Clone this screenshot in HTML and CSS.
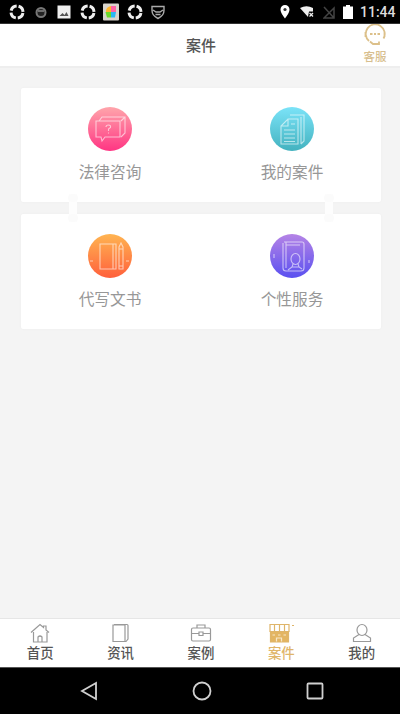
FILE: index.html
```
<!DOCTYPE html>
<html lang="zh-CN">
<head>
    <meta charset="UTF-8">
    <meta name="viewport" content="width=device-width, initial-scale=1.0">
    <title>案件</title>
    <link rel="stylesheet" href="styles.css">
</head>
<body>
    <!-- Phone status bar -->
    <div class="status-bar">
        <div class="status-icons">
            <svg width="18" height="18" viewBox="0 0 18 18"><circle class="ring" cx="9" cy="9" r="6"/></svg>
            <svg width="18" height="18" viewBox="0 0 18 18"><circle cx="9" cy="9.500" r="4.500" fill="#222" stroke="#777" stroke-width="2"/><path d="M6 8h6" stroke="#888" stroke-width="1.500"/></svg>
            <svg width="18" height="18" viewBox="0 0 18 18"><rect x="2.500" y="2.500" width="13" height="13" fill="#eee"/><path d="M4.500 13l3-3 2 2 2-3 2 4z" fill="#555"/></svg>
            <svg width="18" height="18" viewBox="0 0 18 18"><circle class="ring" cx="9" cy="9" r="6"/></svg>
            <svg width="18" height="18" viewBox="0 0 18 18">
                <rect x="1" y="0.500" width="16" height="17" rx="1" fill="#d8d4cc"/>
                <path d="M4 8q0-4 5-5v6H4z" fill="#ffb52e"/>
                <path d="M9 3h5v6H9z" fill="#ff64a5"/>
                <path d="M3.500 9H9v5.500H5z" fill="#6ada2c"/>
                <path d="M9 9h5l-1 5.500H9z" fill="#28b9f5"/>
            </svg>
            <svg width="18" height="18" viewBox="0 0 18 18"><circle class="ring" cx="9" cy="9" r="6"/></svg>
            <svg width="18" height="18" viewBox="0 0 18 18" fill="none" stroke="#aaa" stroke-width="1.400"><path d="M3 3.500h12v4q0 5-6 8-6-3-6-8zM4 7l3 2h4l3-2M6.500 11.500h5"/></svg>
        </div>
        <div class="status-right">
            <svg width="12" height="16" viewBox="0 0 12 16"><path d="M6 1a4.500 4.500 0 0 1 4.500 4.500C10.500 9 6 14.500 6 14.500S1.500 9 1.500 5.500A4.500 4.500 0 0 1 6 1z" fill="#fff"/><circle cx="6" cy="5.500" r="1.600" fill="#333"/></svg>
            <svg width="16" height="14" viewBox="0 0 16 14"><path d="M1 3q6.500-3.500 13 0v3.500h-4L9 12z" fill="#eee"/><path d="M10.500 8l3.500 3.500M14 8l-3.500 3.500" stroke="#eee" stroke-width="1.300"/></svg>
            <svg width="12" height="14" viewBox="0 0 12 14"><path d="M1 13L11 3v10zM1 2l10 11" fill="none" stroke="#444" stroke-width="1.500"/></svg>
            <svg width="10" height="14" viewBox="0 0 10 14"><path d="M3 0h4v1.500h3V14H0V1.500h3z" fill="#fff"/></svg>
            <span class="clock">11:44</span>
        </div>
    </div>

    <!-- Title and customer service -->
    <header class="header">
        <h1>案件</h1>
        <a class="service" href="#">
            <svg width="24" height="23" viewBox="0 0 24 23" fill="none" stroke="#dcc08a" stroke-width="1.800">
                <path d="M6 17A9.500 9.500 0 1 1 20.500 14.500M2.500 8v5M21.500 8v5M7 17.500l3 2.500h6v-2.500"/>
                <path d="M7 10h2.500M11 10h2M14.500 10h2.500"/>
            </svg>
            <span>客服</span>
        </a>
    </header>

    <main class="content">
        <section class="card">
            <a class="item" href="#">
                <span class="circle pink">
                    <svg width="44" height="44" viewBox="0 0 44 44">
                        <path d="M8 14h24v16H17l-3 4-1-4H8zM11 14l3-4h23v16l-4 4M33 14l4-4"/>
                        <path d="M18 20q0-2 2.500-2t2 2.500L20.500 22v2M20.500 25.500v1"/>
                    </svg>
                </span>
                <span class="label">法律咨询</span>
            </a>
            <a class="item" href="#">
                <span class="circle blue">
                    <svg width="44" height="44" viewBox="0 0 44 44">
                        <path d="M18 12h10v25H11V19zM18 12v7h-7M20 8h14v26l-3 3M31 10v27"/>
                        <path d="M14 23h11M14 27h11M14 31h11M14 34.500h11M21 17h4"/>
                    </svg>
                </span>
                <span class="label">我的案件</span>
            </a>
        </section>

        <section class="card linked">
            <i class="connector left"></i>
            <i class="connector right"></i>
            <a class="item" href="#">
                <span class="circle orange">
                    <svg width="44" height="44" viewBox="0 0 44 44">
                        <path d="M12 10h16v25H12zM25 10v25M31 13l2-4 2 4v22h-4zM31 15h4M31 32h4M2 27h3M38 27h3"/>
                    </svg>
                </span>
                <span class="label">代写文书</span>
            </a>
            <a class="item" href="#">
                <span class="circle purple">
                    <svg width="44" height="44" viewBox="0 0 44 44">
                        <path d="M14 8h18q2 0 2 2v24q0 3-3 3H16q-3 0-3-3V9M16 11h14M16 8v26"/>
                        <ellipse cx="25.500" cy="25" rx="4.500" ry="5.500"/>
                        <path d="M23 30l-1 3-4 3M28 30l1 3 3 2M22 33h7M4 20v4M39 26v3"/>
                    </svg>
                </span>
                <span class="label">个性服务</span>
            </a>
        </section>
    </main>

    <!-- Bottom tabs -->
    <nav class="tabs">
        <a class="tab" href="#">
            <svg width="22" height="20" viewBox="0 0 22 20"><path d="M2 9.500L11 1.500l3.500 3V3H17v4l3 2.500M4.500 9v10h13.500V9M9 19v-5q2-2 4 0v5"/></svg>
            <span>首页</span>
        </a>
        <a class="tab" href="#">
            <svg width="22" height="20" viewBox="0 0 22 20"><path d="M3 2h12v16.500H3zM4 1.500h13q1 0 1 1v13.500l-2 2.500h-2"/></svg>
            <span>资讯</span>
        </a>
        <a class="tab" href="#">
            <svg width="22" height="20" viewBox="0 0 22 20"><rect x="1.500" y="5" width="19" height="13" rx="1.500"/><path d="M7 5V2h8v3M1.500 10.500H9M13 10.500h7.500M9 9h4v3.500H9z"/></svg>
            <span>案例</span>
        </a>
        <a class="tab active" href="#">
            <svg width="26" height="20" viewBox="0 0 26 20">
                <path d="M2 1.500h19v7H2zM6.500 1.500v7M11.500 1.500v7M16.500 1.500v7M24 2.500h2"/>
                <path class="solid" d="M2.500 8.500h18V19h-18z"/>
                <path d="M8.500 18.500v-3.500h5v3.500M4.500 12h2.500M10 12h2.500M15.500 12h2.500" stroke="#f7e7c8"/>
            </svg>
            <span>案件</span>
        </a>
        <a class="tab" href="#">
            <svg width="22" height="20" viewBox="0 0 22 20"><ellipse cx="11" cy="7" rx="5" ry="5.500"/><path d="M8 11.500L2.500 15v3.500h17V15L14 11.500"/></svg>
            <span>我的</span>
        </a>
    </nav>

    <!-- Android buttons -->
    <div class="system-nav">
        <svg width="20" height="20" viewBox="0 0 20 20"><path d="M17 2v16L3 10z"/></svg>
        <svg width="20" height="20" viewBox="0 0 20 20"><circle cx="10" cy="10" r="8.500"/></svg>
        <svg width="20" height="20" viewBox="0 0 20 20"><rect x="2.500" y="2.500" width="15" height="15" rx="1"/></svg>
    </div>
</body>
</html>
```

FILE: styles.css
```
* {
    box-sizing: border-box;
}

body {
    margin: 0;
    height: 714px;
    display: flex;
    flex-direction: column;
    overflow: hidden;
    background-color: #f4f4f4;
    font-family: "Noto Sans", "Noto Sans CJK SC", sans-serif;
}

a {
    text-decoration: none;
}

svg {
    display: block;
    flex: none;
}

/* Status bar */
.status-bar {
    height: 24px;
    flex: none;
    display: flex;
    justify-content: space-between;
    align-items: center;
    padding: 0 5px 0 8px;
    background-color: #000;
    border-bottom: 1px solid #333;
}

.status-icons {
    display: flex;
    gap: 5.500px;
}

.ring {
    fill: none;
    stroke: #eee;
    stroke-width: 3;
    stroke-dasharray: 7.400 2;
    stroke-dashoffset: -1;
}

.status-right {
    display: flex;
    align-items: center;
    gap: 8px;
}

.clock {
    margin-left: -1px;
    width: 35px;
    font: 500 14px/20px Roboto, sans-serif;
    color: #ddd;
    white-space: nowrap;
}

/* Header */
.header {
    height: 44px;
    flex: none;
    display: grid;
    grid-template-columns: 50px 1fr 50px;
    background-color: #fff;
    border-bottom: 2px solid #eeeeee;
}

.header h1 {
    grid-column: 2;
    margin: 0;
    font-size: 15px;
    line-height: 43px;
    font-weight: 500;
    text-align: center;
    color: #555;
    padding-left: 2px;
}

.service {
    display: flex;
    flex-direction: column;
    align-items: center;
    font-size: 11.500px;
    line-height: 18px;
    font-weight: 500;
    color: #d8bf8f;
}

.service span {
    margin-top: 1px;
}

/* Cards */
.content {
    flex: 1;
    display: flex;
    flex-direction: column;
    gap: 12px;
    padding: 20px 19px 0 21px;
}

.card {
    height: 114px;
    display: grid;
    grid-template-columns: 1fr 1fr;
    padding-top: 19px;
    background-color: #fff;
    box-shadow: 0 0 2px #eaeaea;
    border-radius: 2px;
}

.linked {
    position: relative;
    height: 115px;
    padding-top: 20px;
}

.item {
    display: flex;
    flex-direction: column;
    align-items: center;
}

.circle {
    width: 44px;
    height: 44px;
    border-radius: 50%;
}

.circle svg {
    fill: none;
    stroke: rgba(255, 255, 255, 0.6);
    stroke-width: 1.100;
}

.pink {
    background: linear-gradient(#ffa5ab, #ff3583);
}

.blue {
    background: linear-gradient(#7be3f8, #43b2bf);
}

.orange {
    background: linear-gradient(#ffb451, #ff603c);
}

.purple {
    background: linear-gradient(#b584e6, #5a50f0);
}

.label {
    margin-top: 9px;
    font-size: 15.700px;
    line-height: 24px;
    color: #979797;
}

/* Strips joining the two cards, with a round knob at each end */
.connector {
    position: absolute;
    top: -20px;
    width: 8px;
    height: 28px;
    background-color: #fdfdfd;
}

.connector::before,
.connector::after {
    content: "";
    position: absolute;
    left: -1px;
    width: 10px;
    height: 8px;
    border-radius: 4px;
    background-color: #fbfbfb;
}

.connector::before {
    top: 0;
}

.connector::after {
    bottom: 0;
}

.connector.left {
    left: 48px;
}

.connector.right {
    right: 48px;
}

.item:nth-of-type(odd) {
    padding-right: 2px;
}

.item:nth-of-type(even) {
    padding-left: 2px;
}

/* Bottom tabs */
.tabs {
    height: 49px;
    flex: none;
    display: grid;
    grid-template-columns: repeat(5, 80.400px);
    padding-top: 4px;
    background-color: #fff;
    border-top: 1px solid #e6e6e6;
}

.tab {
    display: flex;
    flex-direction: column;
    align-items: center;
    font-size: 13.400px;
    line-height: 20px;
    font-weight: 500;
    color: #555;
}

.tab svg {
    fill: none;
    stroke: #999;
    stroke-width: 1.200;
}

.tab.active {
    color: #dfb569;
}

.tab.active svg {
    stroke: #dfb569;
}

.tab .solid {
    fill: #e3b562;
}

/* System navigation */
.system-nav {
    height: 47px;
    flex: none;
    display: flex;
    justify-content: center;
    align-items: center;
    gap: 93px;
    padding-left: 3px;
    background-color: #000;
    border-top: 1px solid #555;
}

.system-nav svg {
    fill: none;
    stroke: #d0d0d0;
    stroke-width: 1.800;
}
```
